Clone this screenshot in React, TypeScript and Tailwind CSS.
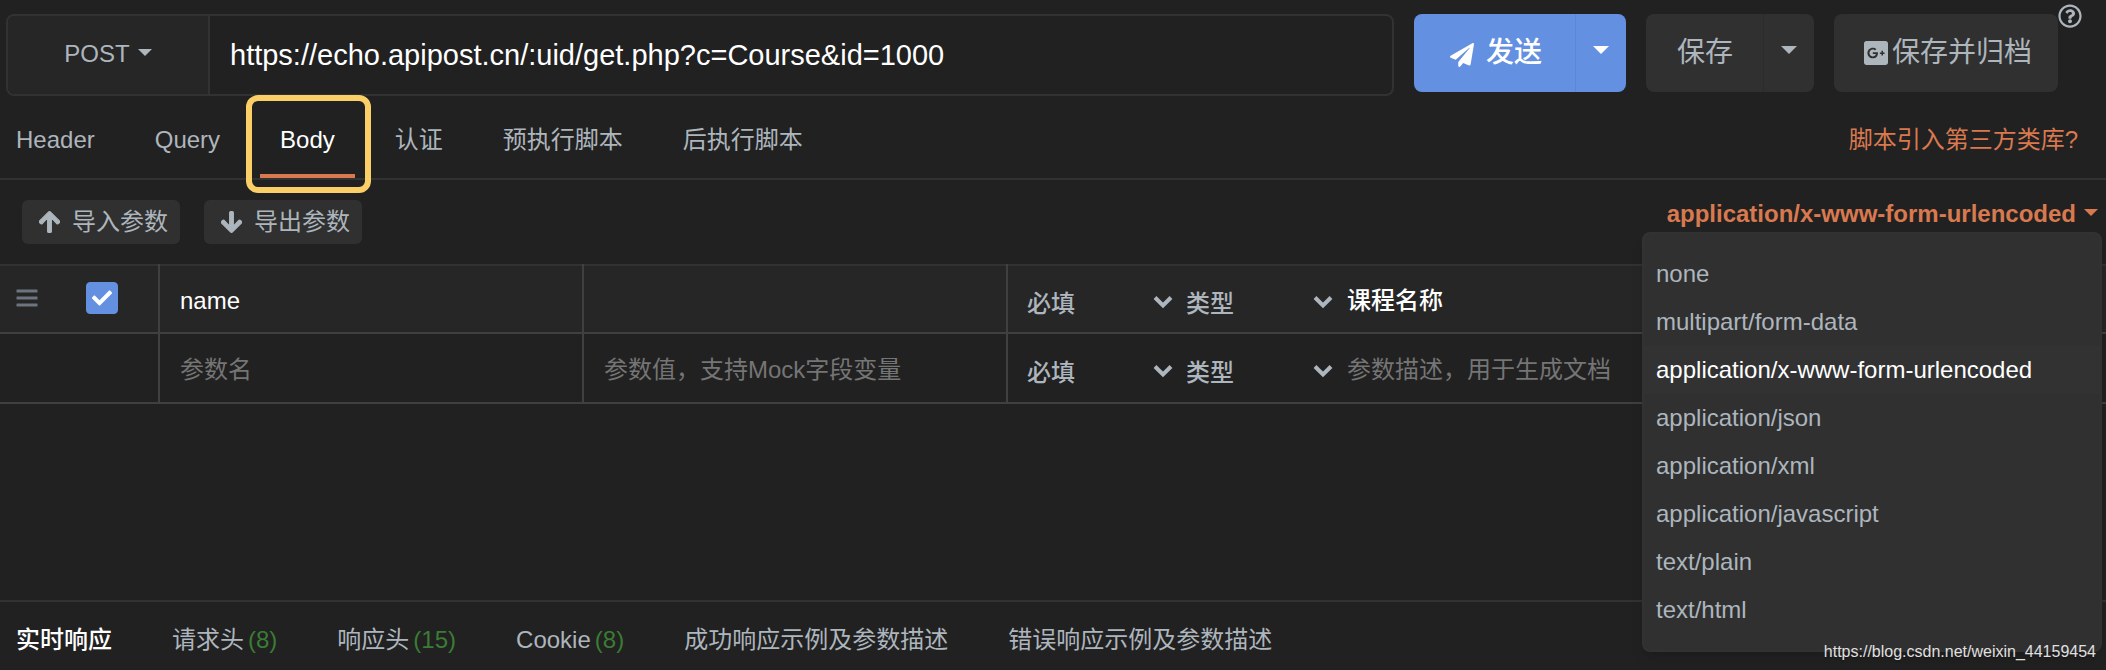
import { useState } from 'react';
import {
  FaArrowDown,
  FaArrowUp,
  FaCheck,
  FaGooglePlusSquare,
  FaPaperPlane,
  FaRegQuestionCircle,
} from 'react-icons/fa';

const requestTabs = ['Header', 'Query', 'Body', '认证', '预执行脚本', '后执行脚本'];

const responseTabs: { label: string; count?: number }[] = [
  { label: '实时响应' },
  { label: '请求头', count: 8 },
  { label: '响应头', count: 15 },
  { label: 'Cookie', count: 8 },
  { label: '成功响应示例及参数描述' },
  { label: '错误响应示例及参数描述' },
];

const contentTypes = [
  'none',
  'multipart/form-data',
  'application/x-www-form-urlencoded',
  'application/json',
  'application/xml',
  'application/javascript',
  'text/plain',
  'text/html',
];

function Caret({ className }: { className: string }) {
  return (
    <svg viewBox="0 0 16 8" preserveAspectRatio="none" className={className} fill="currentColor" aria-hidden="true">
      <path d="M0 0h16L8 8z" />
    </svg>
  );
}

function DragHandle() {
  return (
    <svg viewBox="0 0 22 18" className="h-[18px] w-[22px] text-[#6c757d]" fill="currentColor" aria-hidden="true">
      <rect x="0.5" y="0.5" width="21" height="3" rx="0.5" />
      <rect x="0.5" y="7.5" width="21" height="3" rx="0.5" />
      <rect x="0.5" y="14.5" width="21" height="3" rx="0.5" />
    </svg>
  );
}

function CellSelect({ label }: { label: string }) {
  return (
    <div className="relative pt-2.5">
      <select
        aria-label={label}
        className="block w-full appearance-none bg-transparent pl-[19px] leading-8 font-medium text-[#adb5bd] outline-none"
      >
        <option>{label}</option>
      </select>
      <svg
        viewBox="0 0 20 14"
        className="pointer-events-none absolute -right-1.5 top-[17px] h-3.5 w-5 text-[#adb5bd]"
        fill="none"
        stroke="currentColor"
        strokeWidth="4"
        aria-hidden="true"
      >
        <path d="M2 2.5l8 8 8-8" />
      </svg>
    </div>
  );
}

function ParamRow({ name, desc, filled }: { name: string; desc: string; filled?: boolean }) {
  const [checked, setChecked] = useState(true);
  const inputClass =
    'block w-full bg-transparent px-5 pt-[3px] leading-8 font-medium text-white outline-none placeholder:font-normal placeholder:text-[#757575]';
  const cellClass = 'border-r-2 border-[#404040] p-0';

  return (
    <tr className={`border-b-2 border-[#404040] ${filled ? 'h-[68px] bg-[#262626]' : 'h-[70px]'}`}>
      <td className={cellClass}>
        {filled && (
          <div className="flex items-center gap-12 pb-0.5 pl-4">
            <DragHandle />
            <label className="relative block size-8">
              <input
                type="checkbox"
                aria-label="启用参数"
                checked={checked}
                onChange={(e) => setChecked(e.target.checked)}
                className="block size-8 appearance-none rounded-sm border border-[#6490e2] checked:bg-[#6490e2]"
              />
              {checked && <FaCheck className="pointer-events-none absolute left-1.5 top-1.5 size-5 text-white" />}
            </label>
          </div>
        )}
      </td>
      <td className={cellClass}>
        <input aria-label="参数名" placeholder="参数名" defaultValue={name} className={inputClass} />
      </td>
      <td className={cellClass}>
        <input
          aria-label="参数值"
          placeholder={filled ? '' : '参数值，支持Mock字段变量'}
          className={inputClass}
        />
      </td>
      <td className="p-0">
        <CellSelect label="必填" />
      </td>
      <td className="p-0">
        <CellSelect label="类型" />
      </td>
      <td className="p-0">
        <input aria-label="参数描述" placeholder="参数描述，用于生成文档" defaultValue={desc} className={inputClass} />
      </td>
    </tr>
  );
}

export default function App() {
  const [activeTab, setActiveTab] = useState('Body');
  const [activeResponse, setActiveResponse] = useState('实时响应');
  const [contentType, setContentType] = useState('application/x-www-form-urlencoded');
  const [menuOpen, setMenuOpen] = useState(true);

  return (
    <div className="relative flex min-h-screen flex-col bg-[#212121] font-['Liberation_Sans','Noto_Sans_CJK_SC',sans-serif] text-2xl text-[#adb5bd]">
      {/* Request line */}
      <header className="flex items-start pl-1.5 pr-6">
        <div className="mt-3.5 flex h-[82px] flex-1 overflow-hidden rounded-lg border-2 border-[#323232]">
          <button
            type="button"
            className="flex w-[202px] items-center justify-center gap-2 border-r-2 border-[#323232] bg-[#262626] pb-0.5"
          >
            POST
            <Caret className="mb-1 h-[7px] w-3.5" />
          </button>
          <input
            aria-label="URL"
            defaultValue="https://echo.apipost.cn/:uid/get.php?c=Course&id=1000"
            className="min-w-0 flex-1 bg-transparent px-5 text-[29px] text-white outline-none"
          />
        </div>

        <div className="ml-5 mt-3.5 flex h-[78px] overflow-hidden rounded-lg bg-[#6490e2] text-[28px] text-white">
          <button type="button" className="flex items-center gap-3 pl-9 pr-[33px] font-medium">
            <FaPaperPlane className="mt-1 size-6" />
            发送
          </button>
          <button type="button" aria-label="发送选项" className="border-l border-[#5c86d6] px-[17px]">
            <Caret className="mb-1.5 h-2 w-4" />
          </button>
        </div>

        <div className="ml-5 mt-3.5 flex h-[78px] overflow-hidden rounded-lg bg-[#303030] text-[28px]">
          <button type="button" className="pl-[31px] pr-[30px]">
            保存
          </button>
          <button type="button" aria-label="保存选项" className="border-l border-[#2b2b2b] px-[17px]">
            <Caret className="mb-1.5 h-2 w-4" />
          </button>
        </div>

        <button
          type="button"
          className="ml-5 mt-3.5 flex h-[78px] items-center gap-1 rounded-lg bg-[#303030] pl-[30px] pr-[26px] text-[28px]"
        >
          <FaGooglePlusSquare className="h-7 w-6" />
          保存并归档
        </button>
        <button type="button" aria-label="帮助" className="mt-1">
          <FaRegQuestionCircle className="size-6" />
        </button>
      </header>

      {/* Request tabs */}
      <nav className="flex h-[84px] border-b-2 border-[#323232] pr-7">
        <div className="flex flex-1 gap-5">
          {requestTabs.map((tab) => (
            <button
              key={tab}
              type="button"
              onClick={() => setActiveTab(tab)}
              className={`relative border-b-4 px-5 pt-2.5 first:pl-4 ${
                activeTab === tab ? 'border-[#d9794f] text-white' : 'border-transparent'
              }`}
            >
              {tab}
              {tab === 'Body' && (
                <span className="pointer-events-none absolute -bottom-[19px] -left-3.5 -right-4 -top-px rounded-xl border-6 border-[#fbcf67]" />
              )}
            </button>
          ))}
        </div>
        <a href="#scripts" className="flex items-center pt-1.5 text-[#d9794f]">
          脚本引入第三方类库?
        </a>
      </nav>

      {/* Toolbar */}
      <div className="flex h-[84px] items-start gap-6 pl-[22px] pr-2 pt-5">
        <button type="button" className="flex h-11 items-center gap-3 rounded-md bg-[#303030] pl-[17px] pr-3">
          <FaArrowUp className="h-6 w-[21px]" stroke="currentColor" strokeWidth="24" />
          导入参数
        </button>
        <button type="button" className="flex h-11 items-center gap-3 rounded-md bg-[#303030] pl-[17px] pr-3">
          <FaArrowDown className="h-6 w-[21px]" stroke="currentColor" strokeWidth="24" />
          导出参数
        </button>
        <div className="relative ml-auto">
          <button
            type="button"
            onClick={() => setMenuOpen(!menuOpen)}
            className="flex items-center gap-2 font-bold leading-7 text-[#d9794f]"
          >
            {contentType}
            <Caret className="mb-1 h-[7px] w-3.5" />
          </button>
          {menuOpen && (
            <ul className="absolute -right-1 top-8 z-10 w-[460px] rounded-lg border-2 border-[#323232] bg-[#303030] py-4 shadow-lg">
              {contentTypes.map((type) => (
                <li key={type}>
                  <button
                    type="button"
                    onClick={() => setContentType(type)}
                    className={`block h-12 w-full px-3 text-left ${
                      contentType === type ? 'bg-[#323232] text-white' : ''
                    }`}
                  >
                    {type}
                  </button>
                </li>
              ))}
            </ul>
          )}
        </div>
      </div>

      {/* Params */}
      <div className="flex-1">
        <table className="w-full table-fixed border-collapse border-t-2 border-[#323232]">
          <colgroup>
            <col className="w-[159px]" />
            <col className="w-[424px]" />
            <col className="w-[424px]" />
            <col className="w-40" />
            <col className="w-40" />
            <col />
          </colgroup>
          <tbody>
            <ParamRow name="name" desc="课程名称" filled />
            <ParamRow name="" desc="" />
          </tbody>
        </table>
      </div>

      {/* Response tabs */}
      <nav className="flex gap-[60px] border-t-2 border-[#323232] px-4 pb-3.5 pt-[22px] leading-8">
        {responseTabs.map(({ label, count }) => (
          <button
            key={label}
            type="button"
            onClick={() => setActiveResponse(label)}
            className={activeResponse === label ? 'font-medium text-white' : ''}
          >
            {label}
            {count && <span className="ml-1 text-[#3a7c34]">({count})</span>}
          </button>
        ))}
      </nav>

      <span className="absolute bottom-1.5 right-2.5 z-20 text-base leading-6 text-[#e0e0e0] text-shadow-sm">
        https://blog.csdn.net/weixin_44159454
      </span>
    </div>
  );
}
